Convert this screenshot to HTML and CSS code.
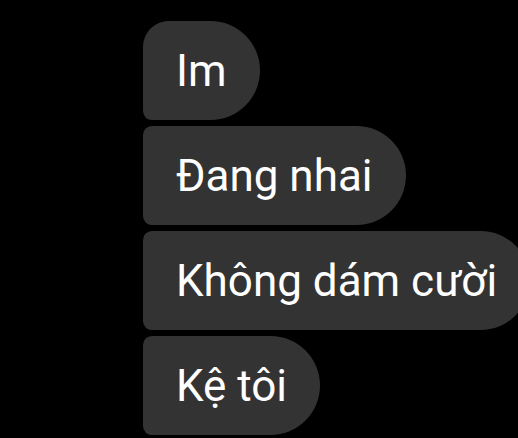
FILE: index.html
```html
<!DOCTYPE html>
<html lang="vi">
<head>
<meta charset="utf-8">
<link rel="stylesheet" href="styles.css">
</head>
<body>
<div class="thread">
  <div class="bubble first">Im</div>
  <div class="bubble">Đang nhai</div>
  <div class="bubble">Không dám cười</div>
  <div class="bubble last">Kệ tôi</div>
</div>
</body>
</html>
```

FILE: styles.css
```css
html, body {
  margin: 0;
  padding: 0;
  background: #000;
  overflow: hidden;
  width: 518px;
  height: 438px;
}
.thread {
  display: flex;
  flex-direction: column;
  align-items: flex-start;
  gap: 6px;
  padding: 21px 0 0 143px;
}
.bubble {
  box-sizing: border-box;
  height: 99px;
  display: flex;
  align-items: center;
  padding: 0 33px 0 33px;
  background: #333333;
  color: #fff;
  font-family: Roboto, "Noto Sans", sans-serif;
  font-size: 44px;
  white-space: nowrap;
  border-radius: 9px 50px 50px 9px;
  flex-shrink: 0;
}
.bubble.first {
  border-top-left-radius: 26px;
}
```
